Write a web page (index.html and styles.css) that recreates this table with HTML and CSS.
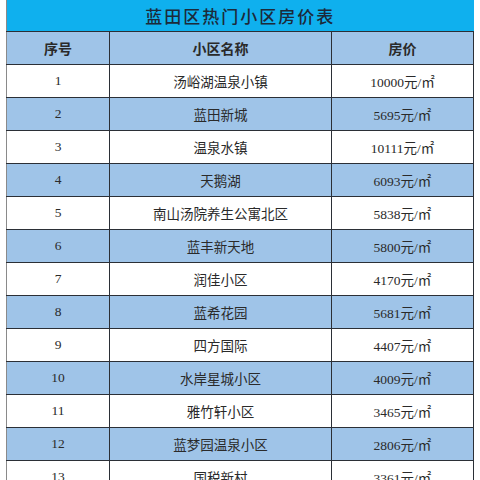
FILE: index.html
```html
<!DOCTYPE html>
<html lang="zh">
<head>
<meta charset="utf-8">
<link rel="stylesheet" href="styles.css">
</head>
<body>
<div class="page">
<table class="price-table">
  <colgroup>
    <col class="c-no">
    <col class="c-name">
    <col class="c-price">
  </colgroup>
  <thead>
    <tr class="title-row"><th colspan="3">蓝田区热门小区房价表</th></tr>
    <tr class="head-row"><th>序号</th><th>小区名称</th><th>房价</th></tr>
  </thead>
  <tbody>
    <tr><td>1</td><td>汤峪湖温泉小镇</td><td>10000元/㎡</td></tr>
    <tr class="alt"><td>2</td><td>蓝田新城</td><td>5695元/㎡</td></tr>
    <tr><td>3</td><td>温泉水镇</td><td>10111元/㎡</td></tr>
    <tr class="alt"><td>4</td><td>天鹅湖</td><td>6093元/㎡</td></tr>
    <tr><td>5</td><td>南山汤院养生公寓北区</td><td>5838元/㎡</td></tr>
    <tr class="alt"><td>6</td><td>蓝丰新天地</td><td>5800元/㎡</td></tr>
    <tr><td>7</td><td>润佳小区</td><td>4170元/㎡</td></tr>
    <tr class="alt"><td>8</td><td>蓝希花园</td><td>5681元/㎡</td></tr>
    <tr><td>9</td><td>四方国际</td><td>4407元/㎡</td></tr>
    <tr class="alt"><td>10</td><td>水岸星城小区</td><td>4009元/㎡</td></tr>
    <tr><td>11</td><td>雅竹轩小区</td><td>3465元/㎡</td></tr>
    <tr class="alt"><td>12</td><td>蓝梦园温泉小区</td><td>2806元/㎡</td></tr>
    <tr><td>13</td><td>国税新村</td><td>3361元/㎡</td></tr>
  </tbody>
</table>
</div>
</body>
</html>
```
FILE: styles.css
```css
html, body {
  margin: 0;
  padding: 0;
  background: #ffffff;
}
.page {
  padding-left: 6px;
  width: 474px;
  height: 480px;
  overflow: hidden;
}
.price-table {
  border-collapse: collapse;
  width: 467px;
  table-layout: fixed;
  font-family: "Liberation Serif", "Noto Sans CJK SC", serif;
  color: #2a2a2a;
}
.c-no { width: 103px; }
.c-name { width: 222px; }
.c-price { width: 142px; }
.price-table th,
.price-table td {
  border: 1px solid #2b2f36;
  text-align: center;
  vertical-align: middle;
  padding: 0;
}
.title-row th {
  background: #0fb0ee;
  height: 31px;
  font-family: "Noto Sans CJK SC", sans-serif;
  font-size: 17px;
  font-weight: 500;
  letter-spacing: 2px;
  color: #1c2a3a;
  border-top: none;
  border-right: none;
  border-left-color: #8a8a8a;
}
.head-row th {
  background: #9fc4e8;
  height: 32px;
  font-family: "Noto Sans CJK SC", sans-serif;
  font-size: 14px;
  font-weight: 700;
  color: #2a2a2a;
}
.price-table td {
  height: 32px;
  font-size: 13.5px;
}
.price-table tr.alt td {
  background: #9fc4e8;
}
.price-table td:first-child,
.price-table th:first-child {
  border-left-color: #8a8a8a;
}
```
